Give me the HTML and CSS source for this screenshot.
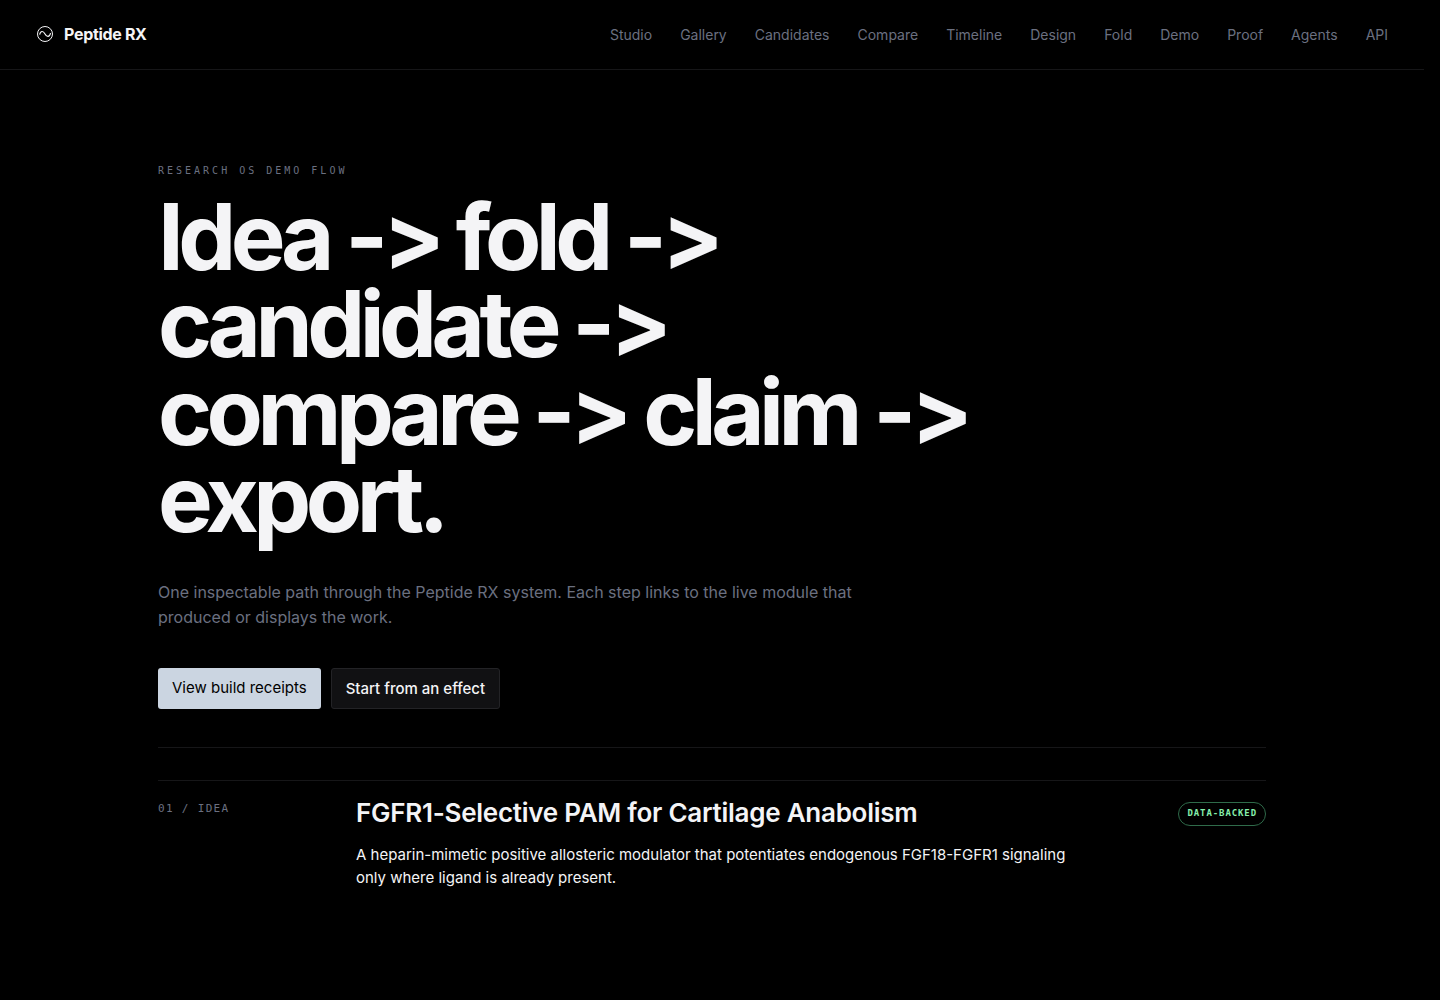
FILE: index.html
```html
<!DOCTYPE html>
<html lang="en">
<head>
    <meta charset="UTF-8">
    <meta name="viewport" content="width=device-width, initial-scale=1.0">
    <title>Peptide RX - Demo</title>
    <link rel="stylesheet" href="styles.css">
</head>
<body>

    <header class="site-header">
        <a class="brand" href="#">
            <svg class="brand-mark" viewBox="0 0 18 18" fill="none" stroke="currentColor" aria-hidden="true">
                <circle cx="9" cy="9" r="7.5" />
                <path stroke-width="1.2" d="M3.6 9.6C4.6 5.6 7.2 5.6 9 9s4.4 3.4 5.6-.8" />
            </svg>
            <span>Peptide RX</span>
        </a>
        <nav class="site-nav">
            <a href="#">Studio</a>
            <a href="#">Gallery</a>
            <a href="#">Candidates</a>
            <a href="#">Compare</a>
            <a href="#">Timeline</a>
            <a href="#">Design</a>
            <a href="#">Fold</a>
            <a href="#">Demo</a>
            <a href="#">Proof</a>
            <a href="#">Agents</a>
            <a href="#">API</a>
        </nav>
    </header>

    <main class="page">
        <section class="hero">
            <p class="eyebrow">RESEARCH OS DEMO FLOW</p>
            <h1>Idea -&gt; fold -&gt; candidate -&gt; compare -&gt; claim -&gt; export.</h1>
            <p class="lede">One inspectable path through the Peptide RX system. Each step links to the live module that produced or displays the work.</p>
            <div class="actions">
                <a class="btn btn-primary" href="#">View build receipts</a>
                <a class="btn btn-secondary" href="#">Start from an effect</a>
            </div>
        </section>

        <section class="steps">
            <article class="step">
                <span class="step-label">01 / IDEA</span>
                <div class="step-body">
                    <h2>FGFR1-Selective PAM for Cartilage Anabolism</h2>
                    <p>A heparin-mimetic positive allosteric modulator that potentiates endogenous FGF18-FGFR1 signaling only where ligand is already present.</p>
                </div>
                <span class="badge">DATA-BACKED</span>
            </article>
        </section>
    </main>

</body>
</html>
```
FILE: styles.css
```css
* {
    box-sizing: border-box;
}
body {
    margin: 0;
    padding-right: 16px;
    min-height: 100vh;
    background-color: #000;
    color: #f4f4f6;
    font-family: Inter, sans-serif;
    font-size: 15px;
}
h1, h2, p {
    margin: 0;
}
a {
    color: inherit;
    text-decoration: none;
}

/* header */
.site-header {
    display: flex;
    align-items: center;
    justify-content: space-between;
    height: 70px;
    padding: 0 36px;
    border-bottom: 1px solid #161618;
}
.brand {
    display: flex;
    align-items: center;
    gap: 10px;
    padding-bottom: 2px;
    font-size: 16px;
    font-weight: 700;
    letter-spacing: -0.02em;
}
.brand-mark {
    width: 18px;
    height: 18px;
}
.site-nav {
    display: flex;
    gap: 28px;
    font-size: 14px;
    color: #6b7080;
}
.site-nav a:hover {
    color: #f4f4f6;
}

/* hero */
.page {
    max-width: 1180px;
    margin: 0 auto;
    padding: 94px 36px;
}
.hero {
    padding-bottom: 38px;
    border-bottom: 1px solid #161618;
}
.eyebrow,
.step-label,
.badge {
    font-family: "DejaVu Sans Mono", monospace;
}
.eyebrow {
    margin-bottom: 15px;
    font-size: 10px;
    line-height: 14px;
    letter-spacing: 0.3em;
    color: #6b7080;
}
h1 {
    max-width: 860px;
    font-size: 92px;
    line-height: 0.95;
    font-weight: 700;
    letter-spacing: -0.06em;
}
.lede {
    max-width: 720px;
    margin-top: 37px;
    font-size: 16px;
    line-height: 25px;
    color: #6b7080;
}
.actions {
    display: flex;
    gap: 10px;
    margin-top: 38px;
}
.btn {
    padding: 10px 14px;
    border-radius: 3px;
    font-size: 15px;
    line-height: 19px;
}
.btn-primary {
    background-color: #cbd5e1;
    color: #000;
}
.btn-secondary {
    border: 1px solid #232326;
    background-color: #111113;
    font-weight: 500;
}

/* steps */
.steps {
    margin-top: 32px;
}
.step {
    display: grid;
    grid-template-columns: 180px 1fr auto;
    gap: 18px;
    align-items: start;
    padding: 16px 0;
    border-top: 1px solid #161618;
}
.step-label {
    padding-top: 4px;
    font-size: 11px;
    line-height: 16px;
    letter-spacing: 0.12em;
    color: #6b7080;
}
.step-body h2 {
    font-size: 26px;
    line-height: 32px;
    font-weight: 600;
    letter-spacing: -0.01em;
}
.step-body p {
    max-width: 720px;
    margin-top: 14px;
    font-size: 15px;
    line-height: 23px;
}
.badge {
    margin-top: 5px;
    padding: 3px 8px 5px;
    border: 1px solid #2f6b4a;
    border-radius: 12px;
    font-size: 9px;
    line-height: 14px;
    font-weight: 700;
    letter-spacing: 0.1em;
    color: #86efac;
}
```
